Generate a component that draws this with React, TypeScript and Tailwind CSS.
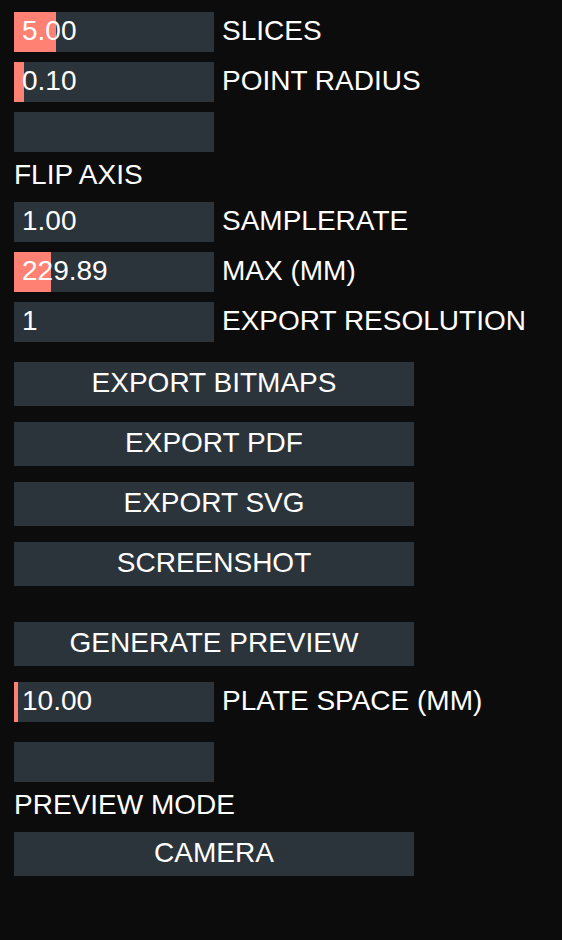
import React from 'react';

const font = { fontFamily: '"Liberation Sans", Arial, sans-serif' };

function Slider({ value, fill, label, className = '' }: { value: string; fill: number; label: string; className?: string }) {
  return (
    <div className={`flex items-start ${className}`}>
      <div className="relative h-[40px] w-[200px] bg-[#2b343a]">
        <div className="absolute left-0 top-0 h-full bg-[#ff8173]" style={{ width: fill }} />
        <div className="relative pl-[8px] text-[28px] leading-[37px] text-white">{value}</div>
      </div>
      <div className="pl-[8px] text-[28px] leading-[37px] text-white">{label}</div>
    </div>
  );
}

function Toggle({ label, className = '' }: { label: string; className?: string }) {
  return (
    <div className={className}>
      <div className="h-[40px] w-[200px] bg-[#2b343a]" />
      <div className="h-[50px] pt-[7px] text-[28px] leading-[31px] text-white">{label}</div>
    </div>
  );
}

function Btn({ label, className = '' }: { label: string; className?: string }) {
  return (
    <div className={`h-[44px] w-[400px] bg-[#2b343a] text-center text-[28px] leading-[41px] text-white ${className}`}>
      {label}
    </div>
  );
}

export default function App() {
  return (
    <div className="min-h-[940px] w-[562px] bg-[#0c0c0c] pl-[14px] pt-[12px]" style={font}>
      <div className="flex flex-col">
        <Slider value="5.00" fill={42} label="SLICES" />
        <Slider value="0.10" fill={10} label="POINT RADIUS" className="mt-[10px]" />
        <Toggle label="FLIP AXIS" className="mt-[10px]" />
        <Slider value="1.00" fill={0} label="SAMPLERATE" />
        <Slider value="229.89" fill={37} label="MAX (MM)" className="mt-[10px]" />
        <Slider value="1" fill={0} label="EXPORT RESOLUTION" className="mt-[10px]" />
        <Btn label="EXPORT BITMAPS" className="mt-[20px]" />
        <Btn label="EXPORT PDF" className="mt-[16px]" />
        <Btn label="EXPORT SVG" className="mt-[16px]" />
        <Btn label="SCREENSHOT" className="mt-[16px]" />
        <Btn label="GENERATE PREVIEW" className="mt-[36px]" />
        <Slider value="10.00" fill={4} label="PLATE SPACE (MM)" className="mt-[16px]" />
        <Toggle label="PREVIEW MODE" className="mt-[20px]" />
        <Btn label="CAMERA" />
      </div>
    </div>
  );
}
